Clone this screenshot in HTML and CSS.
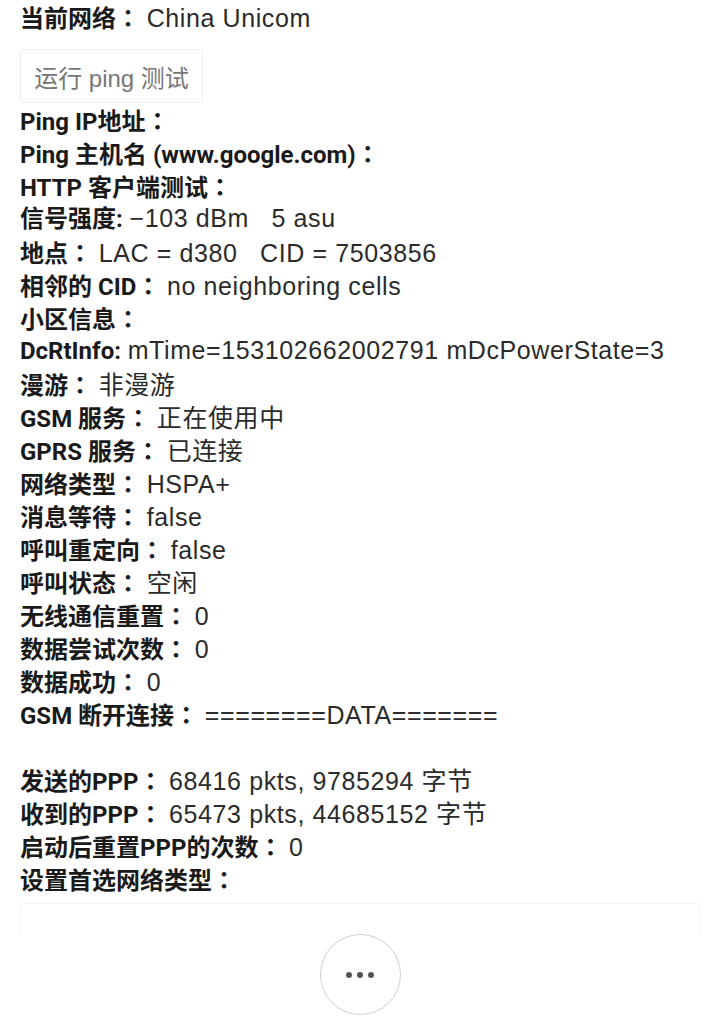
FILE: index.html
```html
<!DOCTYPE html>
<html>
<head>
<meta charset="utf-8">
<link rel="stylesheet" href="styles.css">
</head>
<body>
<div class="page">
  <div class="row"><span class="label">当前网络<span class="c">：</span></span> <span class="val">China Unicom</span></div>
  <div class="btn-wrap"><button class="btn">运行 ping 测试</button></div>
  <div class="row"><span class="label">Ping IP地址<span class="c">：</span></span></div>
  <div class="row"><span class="label">Ping 主机名 (www.google.com)<span class="c">：</span></span></div>
  <div class="row"><span class="label">HTTP 客户端测试<span class="c">：</span></span></div>
  <div class="row"><span class="label">信号强度:</span> <span class="val">−103 dBm&nbsp;&nbsp; 5 asu</span></div>
  <div class="row"><span class="label">地点<span class="c">：</span></span> <span class="val">LAC = d380&nbsp;&nbsp; CID = 7503856</span></div>
  <div class="row"><span class="label">相邻的 CID<span class="c">：</span></span> <span class="val">no neighboring cells</span></div>
  <div class="row"><span class="label">小区信息<span class="c">：</span></span></div>
  <div class="row"><span class="label">DcRtInfo:</span> <span class="val">mTime=153102662002791 mDcPowerState=3</span></div>
  <div class="row"><span class="label">漫游<span class="c">：</span></span> <span class="val">非漫游</span></div>
  <div class="row"><span class="label">GSM 服务<span class="c">：</span></span> <span class="val">正在使用中</span></div>
  <div class="row"><span class="label">GPRS 服务<span class="c">：</span></span> <span class="val">已连接</span></div>
  <div class="row"><span class="label">网络类型<span class="c">：</span></span> <span class="val">HSPA+</span></div>
  <div class="row"><span class="label">消息等待<span class="c">：</span></span> <span class="val">false</span></div>
  <div class="row"><span class="label">呼叫重定向<span class="c">：</span></span> <span class="val">false</span></div>
  <div class="row"><span class="label">呼叫状态<span class="c">：</span></span> <span class="val">空闲</span></div>
  <div class="row"><span class="label">无线通信重置<span class="c">：</span></span> <span class="val">0</span></div>
  <div class="row"><span class="label">数据尝试次数<span class="c">：</span></span> <span class="val">0</span></div>
  <div class="row"><span class="label">数据成功<span class="c">：</span></span> <span class="val">0</span></div>
  <div class="row"><span class="label">GSM 断开连接<span class="c">：</span></span> <span class="val">========DATA=======</span></div>
  <div class="row empty"></div>
  <div class="row"><span class="label">发送的PPP<span class="c">：</span></span> <span class="val">68416 pkts, 9785294 字节</span></div>
  <div class="row"><span class="label">收到的PPP<span class="c">：</span></span> <span class="val">65473 pkts, 44685152 字节</span></div>
  <div class="row"><span class="label">启动后重置PPP的次数<span class="c">：</span></span> <span class="val">0</span></div>
  <div class="row"><span class="label">设置首选网络类型<span class="c">：</span></span></div>
  <div class="select"></div>
  <div class="more-wrap">
    <div class="more"><span class="dot"></span><span class="dot"></span><span class="dot"></span></div>
  </div>
</div>
</body>
</html>
```
FILE: styles.css
```css
html, body {
  margin: 0;
  padding: 0;
  background: #fff;
}
.page {
  padding: 0 20px 0 20px;
  font-family: "Liberation Sans", "Noto Sans CJK SC", sans-serif;
  font-size: 24px;
  line-height: 33px;
  color: #1e1e1e;
}
.row {
  height: 33px;
  white-space: nowrap;
}
.label {
  font-family: Roboto, "Noto Sans CJK SC", sans-serif;
  font-weight: bold;
  color: #1a1a1a;
}
.c {
  font-family: "Noto Sans CJK TC", sans-serif;
}
.val {
  font-family: "Liberation Sans", "Noto Sans CJK SC", sans-serif;
  font-size: 25px;
  letter-spacing: 0.6px;
  color: #2b2b2b;
}
.btn-wrap {
  padding-top: 16px;
  padding-bottom: 0;
}
.btn {
  display: block;
  height: 54px;
  width: 183px;
  padding: 0;
  margin: 0;
  border: 1px solid #efefef;
  border-radius: 3px;
  background: #fff;
  font-family: "Liberation Sans", "Noto Sans CJK SC", sans-serif;
  font-size: 24px;
  color: #777;
  text-align: center;
}
.select {
  margin-top: 8px;
  height: 30px;
  border: 1px solid #f6f6f6;
  border-bottom: none;
  border-radius: 3px 3px 0 0;
}
.more-wrap {
  display: flex;
  justify-content: center;
}
.more {
  width: 79px;
  height: 79px;
  border: 1px solid #cfcfcf;
  border-radius: 50%;
  display: flex;
  align-items: center;
  justify-content: center;
  gap: 5px;
}
.dot {
  width: 6px;
  height: 6px;
  border-radius: 50%;
  background: #555;
}
```
